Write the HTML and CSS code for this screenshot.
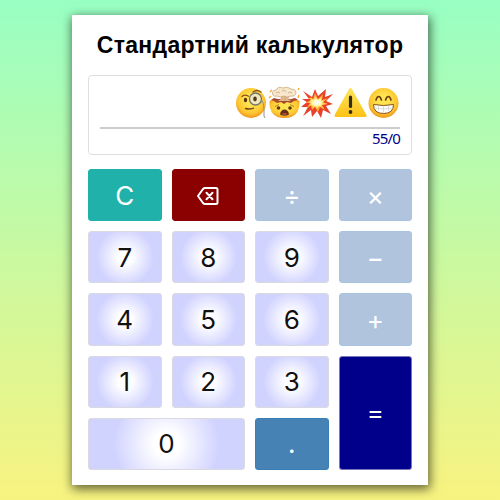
FILE: index.html
```html
<!DOCTYPE html>
<html lang="uk">
<head>
<meta charset="utf-8">
<title>Стандартний калькулятор</title>
<link rel="stylesheet" href="styles.css">
</head>
<body>
<main class="calculator">
  <h1 class="title">Стандартний калькулятор</h1>
  <section class="display">
    <div class="result">
      <svg class="emoji" viewBox="0 0 33 34">
        <defs>
          <radialGradient id="face" cx=".5" cy=".4" r=".6"><stop offset=".3" stop-color="#ffe34f"/><stop offset=".75" stop-color="#fdc52f"/><stop offset="1" stop-color="#ee951b"/></radialGradient>
          <linearGradient id="sign" x2="0" y2="1"><stop stop-color="#fde35a"/><stop offset="1" stop-color="#fcc419"/></linearGradient>
          <radialGradient id="blast"><stop offset=".1" stop-color="#fff"/><stop offset=".5" stop-color="#fff7a8"/><stop offset="1" stop-color="#ffc12e"/></radialGradient>
        </defs>
        <circle cx="16" cy="17" r="15" fill="url(#face)"/>
        <path d="M7 10.500q2.500-2.500 6.500-.3M18 6q4-3 8 0" fill="none" stroke="#865017" stroke-width="1.300" stroke-linecap="round"/>
        <ellipse cx="10.500" cy="14" rx="1.700" ry="2.300" fill="#563414"/>
        <circle cx="20.500" cy="13" r="6" fill="#f1e7bd" stroke="#74736c" stroke-width="1.300"/>
        <ellipse cx="20" cy="13" rx="1.800" ry="2.400" fill="#4e3a22"/>
        <path d="M10.500 22.500q4 1.200 8-.4" fill="none" stroke="#74461a" stroke-width="1.400" stroke-linecap="round"/>
        <path d="M26.500 14q3 3 2.500 16l1 2" fill="none" stroke="#8f9294" stroke-width="1"/>
      </svg>
      <svg class="emoji" viewBox="0 0 33 34">
        <path d="M1.500 15Q1 32 16.500 32T31.500 15l-4-2-3 3-4-1-4 2-4-2-4 1-3-3z" fill="url(#face)"/>
        <path d="M3 14l3-2 4 1h13l4-1 3 2-4 1-3 2-4-1-3 2-3-2-4 1-3-2z" fill="#a94a2c"/>
        <path d="M13 9h8l-1 4 3 2H10l3-2z" fill="#ddb98c"/>
        <path d="M5 9q-2-4 3-5 2-4 7-2 5-2 8 1 5 0 5 4-1 4-5 3-4 2-7 0-4 2-7 0-3 1-4-1" fill="#f7e8cd" stroke="#c99d70" stroke-width=".7"/>
        <path d="M8 7q2-2 4 0m2-2q3-2 4 1m2 1q2-2 4 0M14 11l-2 3m5-3v4m3-4l2 3" fill="none" stroke="#d1a577" stroke-width=".8"/>
        <path d="M2 6l2-2M30 4l1-2M1 12l2-2M30 12l1-3" stroke="#f4aa32" stroke-width="1.400"/>
        <path d="M7 20.500l4-2M22 18.500l4 2" stroke="#a7641b" stroke-width=".8"/>
        <circle cx="10.500" cy="22" r="1.800" fill="#613712"/><circle cx="22" cy="22" r="1.800" fill="#613712"/>
        <path d="M12 28.500q1-5 4.500-5t4.500 5q-4.500 2.500-9 0" fill="#653017"/><path d="M13.500 28q3-2 6 0-3 2-6 0" fill="#b84f3c"/>
      </svg>
      <svg class="emoji" viewBox="0 0 33 34">
        <path d="M2 5l9 6 3-8 3 7 8-7-1 8 8-3-7 7 7 3-7 2 5 8-8-4-2 8-4-7-5 6-1-7-8 6 5-9-7 0 6-5-5-3 7 0z" fill="#e9402b"/>
        <path d="M7 9l5 4 2-6 3 6 5-5-1 6 6-2-5 4 5 2-6 1 3 5-5-3-2 5-3-5-3 3-1-5-5 4 4-6-4 0 5-3-3-2 4 0z" fill="#ffae3a"/>
        <path d="M9 11l4 3 1-4 3 4 4-4-1 5 4-1-3 3 4 1-5 1 2 3-4-2-2 3-2-3-2 2-1-3-4 2 3-4-3-1 3-2z" fill="url(#blast)"/>
      </svg>
      <svg class="emoji" viewBox="0 0 33 34">
        <path d="M16.500 3.500L31 29.500H2z" fill="url(#sign)" stroke="url(#sign)" stroke-width="3" stroke-linejoin="round"/>
        <path d="M16.500 11v9.500" stroke="#302d20" stroke-width="3.200" stroke-linecap="round"/><circle cx="16.500" cy="26" r="1.900" fill="#302d20"/>
      </svg>
      <svg class="emoji" viewBox="0 0 33 34">
        <circle cx="16.500" cy="17" r="15" fill="url(#face)"/>
        <path d="M9 14q1-3.500 2.700-3.500t2.700 3.500M18.600 14q1-3.500 2.700-3.500t2.700 3.500" fill="none" stroke="#6b3d14" stroke-width="1.600" stroke-linecap="round"/>
        <path d="M6.500 18.500q10 2 20 0 0 9-10 9t-10-9z" fill="#fff" stroke="#8a521f" stroke-width="1"/>
        <path d="M7.500 22q9 2 18 0M11.500 20v5M16.500 20v7M21.500 20v5" fill="none" stroke="#c9c7ca" stroke-width=".6"/>
      </svg>
    </div>
    <div class="history">55/0</div>
  </section>
  <section class="keys">
    <button class="key clear">C</button>
    <button class="key erase" aria-label="Стерти"><svg class="erase-icon" viewBox="0 0 24 20"><path d="M9 2h11q1.500 0 1.500 1.500v13q0 1.500-1.500 1.500H9q-1 0-2-1l-5-7 5-7q1-1 2-1z"/><path d="M10.500 6.800l6 6.400m0-6.400l-6 6.400"/></svg></button>
    <button class="key operator">÷</button>
    <button class="key operator">×</button>
    <button class="key">7</button>
    <button class="key">8</button>
    <button class="key">9</button>
    <button class="key operator">−</button>
    <button class="key">4</button>
    <button class="key">5</button>
    <button class="key">6</button>
    <button class="key operator">+</button>
    <button class="key">1</button>
    <button class="key">2</button>
    <button class="key">3</button>
    <button class="key equals">=</button>
    <button class="key zero">0</button>
    <button class="key point">.</button>
  </section>
</main>
</body>
</html>
```
FILE: styles.css
```css
* { box-sizing: border-box; }
body {
  margin: 0;
  height: 100vh;
  display: grid;
  place-items: center;
  background: linear-gradient(#98ffc3, #f8f380);
  font-family: Inter, sans-serif;
}
.calculator {
  width: 356px;
  height: 470px;
  padding: 16px 16px 15px;
  background: #fff;
  box-shadow: 1px 3px 10px 1px rgba(0, 0, 0, .6);
}
.title {
  height: 44px;
  margin: 0 -8px;
  font: bold 23px/28px "Liberation Sans", sans-serif;
  letter-spacing: .3px;
  text-align: center;
  white-space: nowrap;
}
.display {
  height: 80px;
  padding: 10px 11px;
  border: 1px solid #dedede;
  border-radius: 4px;
}
.result {
  height: 43px;
  display: flex;
  justify-content: flex-end;
  border-bottom: 2px solid #ccc;
}
.emoji { width: 33px; height: 34px; }
.history {
  margin-top: -1px;
  color: #00008b;
  font: 15px/20px "Noto Sans", sans-serif;
  letter-spacing: -.8px;
  text-align: right;
}
.keys {
  height: 301px;
  margin-top: 14px;
  display: grid;
  grid-template-columns: repeat(4, 1fr);
  grid-template-rows: repeat(5, 1fr);
  gap: 10px;
}
.key {
  display: flex;
  align-items: center;
  justify-content: center;
  min-width: 0;
  padding: 1px 0 0;
  border: 1px solid #d9d9df;
  border-radius: 3px;
  background: radial-gradient(circle, #fff 15%, #d1d3ff 65%);
  color: #111;
  font: 26px/1 Inter, sans-serif;
}
.clear { background: #20b2aa; border-color: #20b2aa; color: #fff; }
.erase { background: #8b0000; border-color: #8b0000; }
.operator { background: #b0c4de; border-color: #a9c4e2; color: #fff; font-size: 26px; }
.equals { grid-row: span 2; background: #00008b; border-color: #7777bd; color: #fff; }
.zero { grid-column: span 2; }
.point { background: #4682b4; border-color: #3b7eb5; color: #fff; }
.erase-icon { width: 24px; height: 20px; fill: none; stroke: #fff; stroke-width: 2; stroke-linejoin: round; stroke-linecap: round; }
```
